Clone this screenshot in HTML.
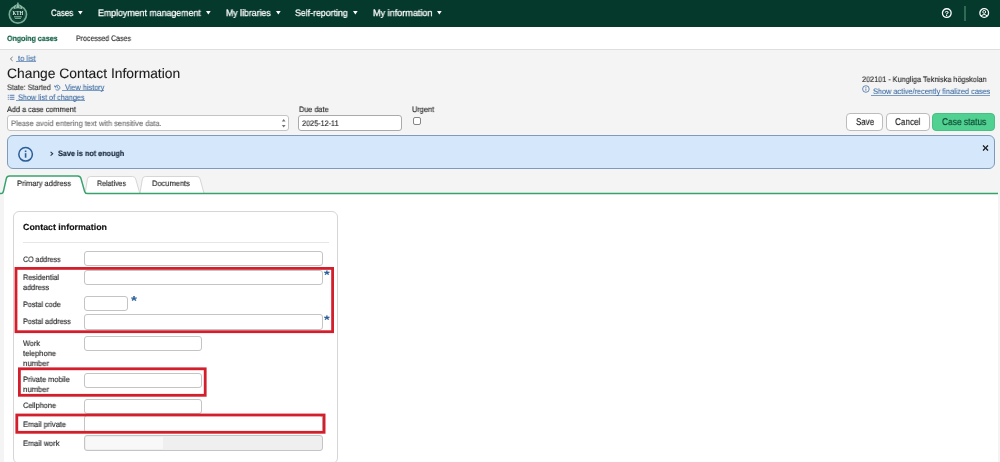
<!DOCTYPE html>
<html lang="en"><head><meta charset="utf-8"><title>Change Contact Information</title>
<style>
*{box-sizing:border-box;margin:0;padding:0}
html,body{width:1000px;height:462px;overflow:hidden}
body{position:relative;background:#f4f4f4;font-family:"Liberation Sans",sans-serif;font-size:8px;color:#262626;line-height:1}
.a{position:absolute}
.t{position:absolute;white-space:nowrap;line-height:1;transform-origin:0 0;will-change:transform;text-rendering:geometricPrecision;-webkit-text-stroke:0.14px}
.inp{position:absolute;background:#fff;border:1px solid #c4c4c4;border-radius:3px}
.btn{position:absolute;top:113px;height:18px;border:1px solid #bcbcbc;border-radius:4px;background:#fff}
.g{will-change:transform}
.ul{position:absolute;height:1px;background:#7b9cc3}
</style></head><body>
<!-- top bar -->
<div class="a" style="left:0;top:0;width:1000px;height:27px;background:#05392c"></div>
<svg class="a g" style="left:6px;top:1px" width="24" height="25" viewBox="0 0 24 25">
  <circle cx="11.9" cy="13.5" r="8.6" fill="none" stroke="#78ab95" stroke-width="1.7"/>
  <circle cx="11.9" cy="13.5" r="6.7" fill="none" stroke="#2f6b57" stroke-width="0.5"/>
  <path d="M7.8 7.9 Q6.9 4.4 11.9 3.1 Q16.9 4.4 16 7.9 Q11.9 6.5 7.8 7.9 Z" fill="#93bfab"/>
  <path d="M11.9 1.5 V3.6 M11 2.3 H12.8" stroke="#93bfab" stroke-width="0.8" fill="none"/>
  <path d="M9.7 7 Q9.5 5.2 11 4.4 M14.1 7 Q14.3 5.2 12.8 4.4" stroke="#0b4636" stroke-width="0.7" fill="none"/>
  <text x="11.9" y="14.3" font-family="Liberation Serif,serif" font-size="6.2" font-weight="bold" fill="#e3eee9" text-anchor="middle" textLength="10.6" lengthAdjust="spacingAndGlyphs">KTH</text>
  <rect x="8" y="15.3" width="7.8" height="1.1" fill="#8fb8a6"/>
  <rect x="8.8" y="17.1" width="6.2" height="0.9" fill="#7dab98"/>
</svg>
<svg class="a" style="left:77.7px;top:11.3px" width="6" height="5" viewBox="0 0 6 5"><path d="M0 0 H4.7 L2.35 3.6 Z" fill="#fff"/></svg>
<svg class="a" style="left:205.5px;top:11.3px" width="6" height="5" viewBox="0 0 6 5"><path d="M0 0 H4.7 L2.35 3.6 Z" fill="#fff"/></svg>
<svg class="a" style="left:275.5px;top:11.3px" width="6" height="5" viewBox="0 0 6 5"><path d="M0 0 H4.7 L2.35 3.6 Z" fill="#fff"/></svg>
<svg class="a" style="left:352.8px;top:11.3px" width="6" height="5" viewBox="0 0 6 5"><path d="M0 0 H4.7 L2.35 3.6 Z" fill="#fff"/></svg>
<svg class="a" style="left:437.0px;top:11.3px" width="6" height="5" viewBox="0 0 6 5"><path d="M0 0 H4.7 L2.35 3.6 Z" fill="#fff"/></svg>
<svg class="a g" style="left:940px;top:6.7px" width="13" height="13" viewBox="0 0 13 13"><circle cx="6.8" cy="6.1" r="4.35" fill="none" stroke="#fff" stroke-width="1.3"/><text x="6.8" y="8.7" font-size="7.3" font-weight="bold" fill="#fff" text-anchor="middle" font-family="Liberation Sans,sans-serif">?</text></svg>
<div class="a" style="left:964px;top:6px;width:2px;height:15px;background:#2f6a55"></div>
<svg class="a" style="left:978px;top:6.8px" width="13" height="13" viewBox="0 0 13 13"><circle cx="6.2" cy="6" r="4.35" fill="none" stroke="#fff" stroke-width="1.3"/><circle cx="6.2" cy="4.9" r="1.45" fill="none" stroke="#fff" stroke-width="0.95"/><path d="M3.3 9 Q6.2 5.9 9.1 9" fill="none" stroke="#fff" stroke-width="1.1"/></svg>
<!-- sub nav -->
<div class="a" style="left:0;top:27px;width:1000px;height:22px;background:#fff"></div>
<div class="a" style="left:0;top:49px;width:1000px;height:1px;background:#dedede"></div>

<!-- back link -->
<svg class="a" style="left:9px;top:55px" width="6" height="8" viewBox="0 0 6 8"><path d="M3.6 1.9 L1.4 3.9 L3.6 5.9" fill="none" stroke="#4d5a68" stroke-width="0.8"/></svg>
<div class="ul" style="left:15.8px;top:61px;width:19.8px"></div>
<!-- history icon -->
<svg class="a" style="left:54.2px;top:83.6px" width="8" height="8" viewBox="0 0 8 8"><g transform="scale(0.9)"><path d="M1.3 3.2 A2.7 2.7 0 1 1 1.6 5.6" fill="none" stroke="#3b6aa0" stroke-width="0.85"/><path d="M0.4 1.6 L1.2 3.6 L3.1 2.9" fill="none" stroke="#3b6aa0" stroke-width="0.85"/><path d="M3.9 2.6 L3.9 4.3 L5.1 5" fill="none" stroke="#3b6aa0" stroke-width="0.75"/></g></svg>
<div class="ul" style="left:62.4px;top:90px;width:41.8px"></div>
<!-- list icon -->
<svg class="a" style="left:7px;top:94px" width="9" height="7" viewBox="0 0 9 7"><g fill="#4872a6"><rect x="0.8" y="0.8" width="1" height="0.9"/><rect x="2.7" y="0.8" width="4.7" height="0.9"/><rect x="0.8" y="2.8" width="1" height="0.9"/><rect x="2.7" y="2.8" width="4.7" height="0.9"/><rect x="0.8" y="4.8" width="1" height="0.9"/><rect x="2.7" y="4.8" width="4.7" height="0.9"/></g></svg>
<div class="ul" style="left:16px;top:100px;width:68.6px"></div>

<!-- comment / date / urgent -->
<div class="inp" style="left:7px;top:115px;width:281.5px;height:16px"></div>
<svg class="a" style="left:280px;top:117px" width="8" height="12" viewBox="0 0 8 12"><path d="M1.8 4.4 L3.7 1.9 L5.6 4.4 Z" fill="#747474"/><path d="M1.8 7.9 L3.7 10.4 L5.6 7.9 Z" fill="#747474"/></svg>
<div class="inp" style="left:298px;top:115px;width:104px;height:16px;border-color:#aaa"></div>
<div class="a" style="left:413px;top:117px;width:8px;height:8px;border:1px solid #858585;border-radius:2px;background:#fff"></div>

<!-- right info -->
<svg class="a" style="left:861px;top:83.6px" width="10" height="10" viewBox="0 0 10 10"><circle cx="4.9" cy="5" r="3.3" fill="none" stroke="#2b5d97" stroke-width="0.7"/><rect x="4.55" y="4.5" width="0.7" height="2.2" fill="#2b5d97"/><rect x="4.55" y="3.2" width="0.7" height="0.8" fill="#2b5d97"/></svg>
<div class="ul" style="left:870.5px;top:95px;width:119.5px"></div>

<!-- buttons -->
<div class="btn" style="left:846px;width:37px"></div>
<div class="btn" style="left:885.5px;width:44.5px"></div>
<div class="btn" style="left:932px;width:63px;background:#50d091;border-color:#47c084"></div>

<!-- info banner -->
<div class="a" style="left:7px;top:135px;width:988px;height:33.5px;background:#d5e7fa;border:1px solid #7d9cbc;border-radius:6px"></div>
<svg class="a" style="left:17px;top:146px" width="17" height="17" viewBox="0 0 17 17"><circle cx="8.6" cy="8.3" r="6.8" fill="none" stroke="#2b5d97" stroke-width="1.5"/><rect x="7.8" y="7.2" width="1.6" height="4.5" fill="#2b5d97"/><rect x="7.8" y="4.5" width="1.6" height="1.6" fill="#2b5d97"/></svg>
<svg class="a" style="left:49px;top:150px" width="6" height="8" viewBox="0 0 6 8"><path d="M1.6 1.9 L3.7 3.8 L1.6 5.7" fill="none" stroke="#22344c" stroke-width="1.1"/></svg>
<div class="t" style="left:981.6px;top:142px;font-size:12px;color:#111;-webkit-text-stroke:0.35px">×</div>

<!-- tabs + content panel -->
<div class="a" style="left:4px;top:193px;width:994px;height:269px;background:#fff"></div>
<svg class="a" style="left:0;top:170.5px" width="1000" height="26" viewBox="0 0 1000 26">
  <path d="M139.8 23 L142.4 8 Q142.9 5.5 145.4 5.5 L197 5.5 Q199.5 5.5 200.1 8 L204.2 23 Z" fill="#fff" stroke="#d6d6d6" stroke-width="1"/>
  <path d="M85 23 L87.4 8 Q87.9 5.5 90.4 5.5 L132.6 5.5 Q135.1 5.5 135.7 8 L140 23 Z" fill="#fff" stroke="#d6d6d6" stroke-width="1"/>
  <path d="M4 22.6 Q2.8 22.6 3.3 20.8 L6.3 7.6 Q6.9 5 9.6 5 L77.6 5 Q80.3 5 81 7.6 L84.6 20.4 Q85.3 22.6 87.6 22.6 L998 22.6 L998 26 L4 26 Z" fill="#fff" stroke="none"/>
  <path d="M0 22.6 L1.2 22.6 Q2.8 22.6 3.3 20.8 L6.3 7.6 Q6.9 5 9.6 5 L77.6 5 Q80.3 5 81 7.6 L84.6 20.4 Q85.3 22.6 87.6 22.6 L998 22.6" fill="none" stroke="#38a26d" stroke-width="1.5"/>
</svg>

<!-- card -->
<div class="a" style="left:13px;top:211px;width:325px;height:253px;background:#fff;border:1px solid #d6d6d6;border-radius:6px"></div>
<div class="a" style="left:23px;top:242px;width:305.5px;height:1px;background:#e6e6e6"></div>

<div class="inp" style="left:84px;top:251px;width:239px;height:15px"></div>
<div class="inp" style="left:84px;top:269.5px;width:239px;height:15.5px"></div>
<div class="inp" style="left:84px;top:296px;width:44px;height:15px"></div>
<div class="inp" style="left:84px;top:314px;width:239px;height:15.5px"></div>
<div class="inp" style="left:84px;top:335.5px;width:118px;height:15.5px"></div>
<div class="inp" style="left:84px;top:372.5px;width:118px;height:15px"></div>
<div class="inp" style="left:84px;top:399px;width:118px;height:15px"></div>
<div class="inp" style="left:84px;top:415px;width:239px;height:18px"></div>
<div class="inp" style="left:84px;top:435px;width:239px;height:15.5px;background:#efefef"></div>
<div class="a" style="left:86px;top:437px;width:77px;height:12px;background:#f8f8f8"></div>

<!-- required stars -->
<div class="t" style="left:324.3px;top:269.4px;font-size:12.5px;font-weight:bold;color:#2b5d97;-webkit-text-stroke:0;transform:scaleX(1.18)">*</div>
<div class="t" style="left:130.5px;top:294.2px;font-size:13px;font-weight:bold;color:#2b5d97;-webkit-text-stroke:0;transform:scaleX(1.18)">*</div>
<div class="t" style="left:324.3px;top:313.8px;font-size:12.5px;font-weight:bold;color:#2b5d97;-webkit-text-stroke:0;transform:scaleX(1.18)">*</div>

<!-- red highlight boxes -->
<svg class="a" style="left:0;top:260px" width="345" height="180" viewBox="0 260 345 180">
  <g fill="none" stroke="#d31f2b" stroke-width="2.8">
    <rect x="16" y="268.4" width="316.6" height="63.3"/>
    <rect x="19.4" y="368.8" width="185.8" height="26.5"/>
    <rect x="16.8" y="415" width="307.3" height="17.3"/>
  </g>
</svg>

<div class="t" style="left:50.90px;top:8.00px;font-size:9.4px;-webkit-text-stroke:0.25px;color:#fff;transform:scaleX(0.8315)">Cases</div>
<div class="t" style="left:98.00px;top:8.00px;font-size:9.4px;-webkit-text-stroke:0.25px;color:#fff;transform:scaleX(0.9389)">Employment management</div>
<div class="t" style="left:225.50px;top:8.00px;font-size:9.4px;-webkit-text-stroke:0.25px;color:#fff;transform:scaleX(0.9335)">My libraries</div>
<div class="t" style="left:295.25px;top:8.00px;font-size:9.4px;-webkit-text-stroke:0.25px;color:#fff;transform:scaleX(0.9373)">Self-reporting</div>
<div class="t" style="left:373.00px;top:8.00px;font-size:9.4px;-webkit-text-stroke:0.25px;color:#fff;transform:scaleX(0.9677)">My information</div>
<div class="t" style="left:7.00px;top:35.00px;font-size:7.9px;font-weight:700;color:#0b5c42;transform:scaleX(0.8926)">Ongoing cases</div>
<div class="t" style="left:75.75px;top:35.00px;font-size:8px;color:#272727;transform:scaleX(0.8771)">Processed Cases</div>
<div class="t" style="left:18.00px;top:55.00px;font-size:7.9px;-webkit-text-stroke:0.08px;color:#36679f;transform:scaleX(0.9554)">to list</div>
<div class="t" style="left:7.30px;top:67.00px;font-size:13.7px;-webkit-text-stroke:0.1px;color:#1c1c1c;transform:scaleX(1.0117)">Change Contact Information</div>
<div class="t" style="left:7.20px;top:84.00px;font-size:7.9px;color:#3a3a3a;transform:scaleX(0.9078)">State: Started</div>
<div class="t" style="left:64.80px;top:84.00px;font-size:7.9px;-webkit-text-stroke:0.08px;color:#36679f;transform:scaleX(0.9291)">View history</div>
<div class="t" style="left:18.00px;top:94.00px;font-size:7.9px;-webkit-text-stroke:0.08px;color:#36679f;transform:scaleX(0.9188)">Show list of changes</div>
<div class="t" style="left:7.00px;top:106.00px;font-size:7.9px;color:#272727;transform:scaleX(0.9275)">Add a case comment</div>
<div class="t" style="left:10.50px;top:120.00px;font-size:7.8px;color:#757575;transform:scaleX(0.9555)">Please avoid entering text with sensitive data.</div>
<div class="t" style="left:298.50px;top:106.00px;font-size:7.9px;color:#272727;transform:scaleX(0.9210)">Due date</div>
<div class="t" style="left:301.60px;top:120.00px;font-size:7.9px;color:#272727;transform:scaleX(0.9200)">2025-12-11</div>
<div class="t" style="left:411.50px;top:106.00px;font-size:7.9px;color:#272727;transform:scaleX(0.9330)">Urgent</div>
<div class="t" style="left:862.25px;top:76.00px;font-size:7.9px;color:#2a2a2a;transform:scaleX(0.9224)">202101 - Kungliga Tekniska högskolan</div>
<div class="t" style="left:872.75px;top:88.00px;font-size:7.9px;-webkit-text-stroke:0.08px;color:#36679f;transform:scaleX(0.9283)">Show active/recently finalized cases</div>
<div class="t" style="left:855.50px;top:118.00px;font-size:9.8px;color:#222;transform:scaleX(0.8056)">Save</div>
<div class="t" style="left:894.80px;top:118.00px;font-size:9.8px;color:#222;transform:scaleX(0.8361)">Cancel</div>
<div class="t" style="left:941.70px;top:118.00px;font-size:9.8px;color:#0c3f2c;transform:scaleX(0.8563)">Case status</div>
<div class="t" style="left:58.00px;top:150.00px;font-size:7.9px;font-weight:700;color:#16263c;transform:scaleX(0.9158)">Save is not enough</div>
<div class="t" style="left:17.00px;top:180.00px;font-size:7.9px;color:#272727;transform:scaleX(0.9399)">Primary address</div>
<div class="t" style="left:96.75px;top:180.00px;font-size:7.9px;color:#272727;transform:scaleX(0.8936)">Relatives</div>
<div class="t" style="left:151.75px;top:180.00px;font-size:7.9px;color:#272727;transform:scaleX(0.9481)">Documents</div>
<div class="t" style="left:23.00px;top:223.00px;font-size:8.8px;font-weight:700;color:#111;transform:scaleX(1.0050)">Contact information</div>
<div class="t" style="left:23.00px;top:256.00px;font-size:7.9px;color:#272727;transform:scaleX(0.8905)">CO address</div>
<div class="t" style="left:23.00px;top:274.00px;font-size:7.9px;color:#272727;transform:scaleX(0.9220)">Residential</div>
<div class="t" style="left:23.00px;top:284.00px;font-size:7.9px;color:#272727;transform:scaleX(0.9260)">address</div>
<div class="t" style="left:23.00px;top:301.00px;font-size:7.9px;color:#272727;transform:scaleX(0.9155)">Postal code</div>
<div class="t" style="left:23.00px;top:318.00px;font-size:7.9px;color:#272727;transform:scaleX(0.9147)">Postal address</div>
<div class="t" style="left:23.00px;top:340.00px;font-size:7.9px;color:#272727;transform:scaleX(0.9299)">Work</div>
<div class="t" style="left:23.00px;top:350.00px;font-size:7.9px;color:#272727;transform:scaleX(0.9518)">telephone</div>
<div class="t" style="left:23.00px;top:360.00px;font-size:7.9px;color:#272727;transform:scaleX(0.9714)">number</div>
<div class="t" style="left:23.00px;top:376.00px;font-size:7.9px;color:#272727;transform:scaleX(0.9400)">Private mobile</div>
<div class="t" style="left:23.00px;top:386.00px;font-size:7.9px;color:#272727;transform:scaleX(0.9714)">number</div>
<div class="t" style="left:23.00px;top:402.00px;font-size:7.9px;color:#272727;transform:scaleX(0.9284)">Cellphone</div>
<div class="t" style="left:22.80px;top:421.00px;font-size:7.9px;color:#272727;transform:scaleX(0.9406)">Email private</div>
<div class="t" style="left:22.80px;top:440.00px;font-size:7.9px;color:#272727;transform:scaleX(0.9432)">Email work</div>
</body></html>
